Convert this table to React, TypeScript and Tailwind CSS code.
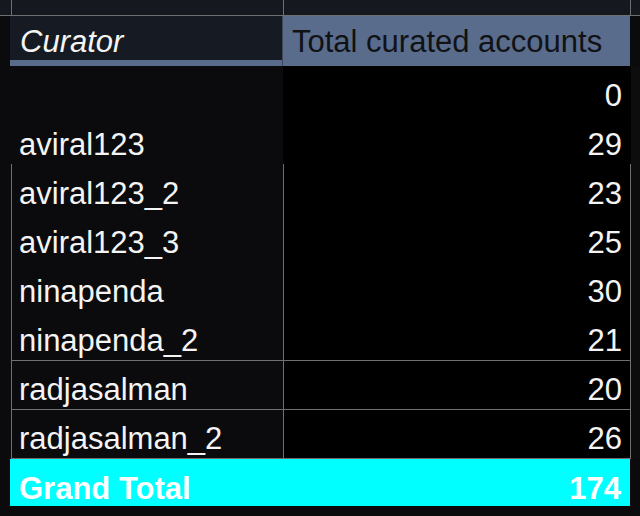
import React from 'react';

const rows = [
    { name: '', total: 0, boxed: false, topLine: false },
    { name: 'aviral123', total: 29, boxed: false, topLine: false },
    { name: 'aviral123_2', total: 23, boxed: true, topLine: false },
    { name: 'aviral123_3', total: 25, boxed: true, topLine: false },
    { name: 'ninapenda', total: 30, boxed: true, topLine: false },
    { name: 'ninapenda_2', total: 21, boxed: true, topLine: false },
    { name: 'radjasalman', total: 20, boxed: true, topLine: true },
    { name: 'radjasalman_2', total: 26, boxed: true, topLine: true },
];

const App = () => {
    const grandTotal = rows.reduce((acc, r) => acc + r.total, 0);

    return (
        <div className="w-[640px] h-[516px] overflow-hidden bg-[#0b0b0d] text-[31px] leading-[35px] text-[#f4f4f4] font-['Liberation_Sans',Arial,sans-serif]">
            {/* row above the header */}
            <div className="flex h-[16px] bg-[#15181e] border-b border-[#6f6f6f]">
                <div className="w-[12px] border-r border-[#6f6f6f]" />
                <div className="w-[272px] border-r border-[#6f6f6f]" />
                <div className="w-[347px] border-r border-[#6f6f6f]" />
            </div>

            {/* header */}
            <div className="flex h-[50px]">
                <div className="w-[10px]" />
                <div className="w-[272px] bg-[#5a6c8b]">
                    <div className="h-[44px] bg-[#161a22] pl-[10px] pt-[8px] italic">Curator</div>
                </div>
                <div className="w-[348px] bg-[#5a6c8b] border-l border-[#3c4658] pl-[9px] pt-[8px] text-[#101216]">
                    Total curated accounts
                </div>
            </div>

            {/* data rows */}
            {rows.map((row, i) => (
                <div key={i} className="flex h-[49px]">
                    <div className="w-[11px]" />
                    <div
                        className={`w-[272px] flex items-end pl-[7px] pb-[2px] bg-[#0b0b0d] border-l ${row.boxed ? 'border-[#6f6f6f]' : 'border-transparent'} ${row.topLine ? 'border-t border-t-[#6f6f6f]' : ''}`}
                    >
                        {row.name}
                    </div>
                    <div
                        className={`w-[348px] flex items-end justify-end pr-[8px] pb-[2px] bg-black border-l border-r ${row.boxed ? 'border-[#6f6f6f]' : 'border-transparent'} ${row.topLine ? 'border-t border-t-[#6f6f6f]' : ''}`}
                    >
                        {row.total}
                    </div>
                    <div className="flex-1 bg-[#0d0d0d]" />
                </div>
            ))}

            {/* grand total */}
            <div className="ml-[11px] w-[620px] h-px bg-[#6f6f6f]" />
            <div className="ml-[10px] w-[620px] h-[47px] bg-[#00ffff] flex items-end justify-between pl-[9px] pr-[9px] pb-0 font-bold text-white">
                <span>Grand Total</span>
                <span>{grandTotal}</span>
            </div>
        </div>
    );
};

export default App;
